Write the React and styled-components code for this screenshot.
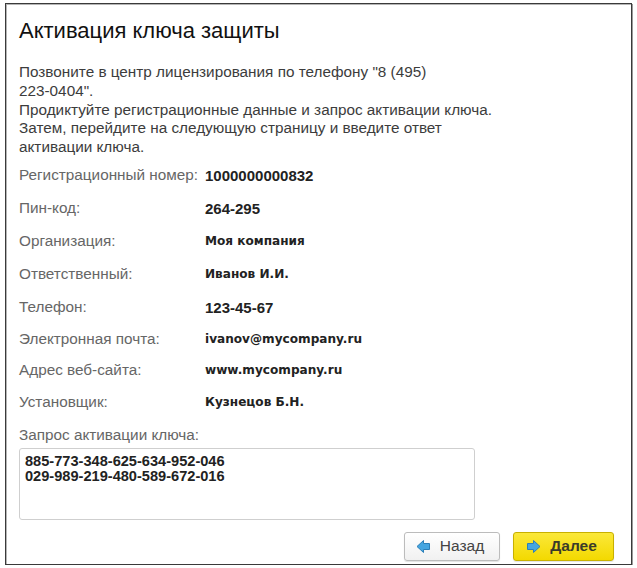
import React from 'react'
import styled, { createGlobalStyle } from 'styled-components'

const GlobalStyle = createGlobalStyle`
  html, body {
    margin: 0;
    padding: 0;
    background: #fff;
  }
  body {
    font-family: 'Liberation Sans', Arial, sans-serif;
  }
`

const fields = [
  { label: 'Регистрационный номер:', value: '1000000000832', wide: false, h: 33 },
  { label: 'Пин-код:', value: '264-295', wide: false, h: 33 },
  { label: 'Организация:', value: 'Моя компания', wide: true, h: 33 },
  { label: 'Ответственный:', value: 'Иванов И.И.', wide: true, h: 33 },
  { label: 'Телефон:', value: '123-45-67', wide: false, h: 33 },
  { label: 'Электронная почта:', value: 'ivanov@mycompany.ru', wide: true, h: 30 },
  { label: 'Адрес веб-сайта:', value: 'www.mycompany.ru', wide: true, h: 32 },
  { label: 'Установщик:', value: 'Кузнецов Б.Н.', wide: true, h: 32 }
]

const ArrowIcon = ({ dir }) => (
  <svg width="15" height="15" viewBox="0 0 15 15">
    <path
      d={
        dir === 'left'
          ? 'M1 7.5 L7.5 1.5 L7.5 4.5 L13.5 4.5 L13.5 10.5 L7.5 10.5 L7.5 13.5 Z'
          : 'M14 7.5 L7.5 1.5 L7.5 4.5 L1.5 4.5 L1.5 10.5 L7.5 10.5 L7.5 13.5 Z'
      }
      fill="#45a5e0"
      stroke="#2c7fb8"
      strokeWidth="1"
      strokeLinejoin="round"
    />
  </svg>
)

export default function App() {
  return (
    <>
      <GlobalStyle />
      <Window>
        <Title>Активация ключа защиты</Title>
        <Intro>
          <div>Позвоните в центр лицензирования по телефону "8 (495)</div>
          <div>223-0404".</div>
          <div>Продиктуйте регистрационные данные и запрос активации ключа.</div>
          <div>Затем, перейдите на следующую страницу и введите ответ</div>
          <div>активации ключа.</div>
        </Intro>

        <Fields>
          {fields.map((f) => (
            <Row key={f.label} h={f.h}>
              <Label>{f.label}</Label>
              <Value wide={f.wide}>{f.value}</Value>
            </Row>
          ))}
        </Fields>

        <RequestLabel>Запрос активации ключа:</RequestLabel>
        <RequestBox>
          <div>885-773-348-625-634-952-046</div>
          <div>029-989-219-480-589-672-016</div>
        </RequestBox>

        <Buttons>
          <Button>
            <ArrowIcon dir="left" />
            Назад
          </Button>
          <Button primary>
            <ArrowIcon dir="right" />
            Далее
          </Button>
        </Buttons>
      </Window>
    </>
  )
}

const Window = styled.div`
  box-sizing: border-box;
  margin: 3px 0 0 5px;
  width: 627px;
  height: 562px;
  border: 1px solid #3a3a3a;
  box-shadow: 1px 1px 0 #9a9a9a, inset 1px 1px 0 #b5b5b5;
  padding: 14px 17px 0 13px;
  display: flex;
  flex-direction: column;
  color: #333;
  overflow: hidden;

  & > * {
    flex-shrink: 0;
  }
`

const Title = styled.h1`
  margin: 0;
  font-size: 22px;
  font-weight: normal;
  line-height: 26px;
  color: #111;
`

const Intro = styled.div`
  margin-top: 19px;
  font-size: 15.3px;
  line-height: 18.8px;
  color: #3c3c3c;
  white-space: nowrap;
`

const Fields = styled.div`
  margin-top: 2px;
  display: flex;
  flex-direction: column;
`

const Row = styled.div`
  display: flex;
  align-items: center;
  height: ${({ h }) => h}px;
`

const Label = styled.div`
  width: 186px;
  font-size: 15.3px;
  color: #666;
  white-space: nowrap;
`

const Value = styled.div`
  font-family: ${({ wide }) => (wide ? "'DejaVu Sans', Verdana, sans-serif" : "'Liberation Sans', Arial, sans-serif")};
  font-size: ${({ wide }) => (wide ? '12.1px' : '15px')};
  font-weight: bold;
  color: #222;
`

const RequestLabel = styled.div`
  margin-top: 8px;
  font-size: 15.3px;
  line-height: 18px;
  color: #666;
`

const RequestBox = styled.div`
  box-sizing: border-box;
  margin-top: 4px;
  width: 456px;
  height: 72px;
  border: 1px solid #cfcfcf;
  border-radius: 3px;
  padding: 5px 5px;
  font-size: 14.6px;
  font-weight: bold;
  line-height: 15.5px;
  color: #222;
`

const Buttons = styled.div`
  margin-top: 12px;
  display: flex;
  justify-content: flex-end;
  gap: 13px;
`

const Button = styled.button`
  box-sizing: border-box;
  height: 29px;
  width: ${({ primary }) => (primary ? '101px' : '96px')};
  display: flex;
  align-items: center;
  justify-content: center;
  gap: 9px;
  padding: 0 8px 0 4px;
  border-radius: 3px;
  font-family: 'Liberation Sans', Arial, sans-serif;
  font-size: 15.5px;
  font-weight: ${({ primary }) => (primary ? 'bold' : 'normal')};
  color: ${({ primary }) => (primary ? '#3b3b2a' : '#444')};
  border: 1px solid ${({ primary }) => (primary ? '#c8b000' : '#bcbcbc')};
  background: ${({ primary }) =>
    primary ? 'linear-gradient(#fbe83a, #f3d900)' : 'linear-gradient(#ffffff, #f1f1f1)'};
  box-shadow: 0 1px 1px rgba(0, 0, 0, 0.12);
  cursor: pointer;
`
